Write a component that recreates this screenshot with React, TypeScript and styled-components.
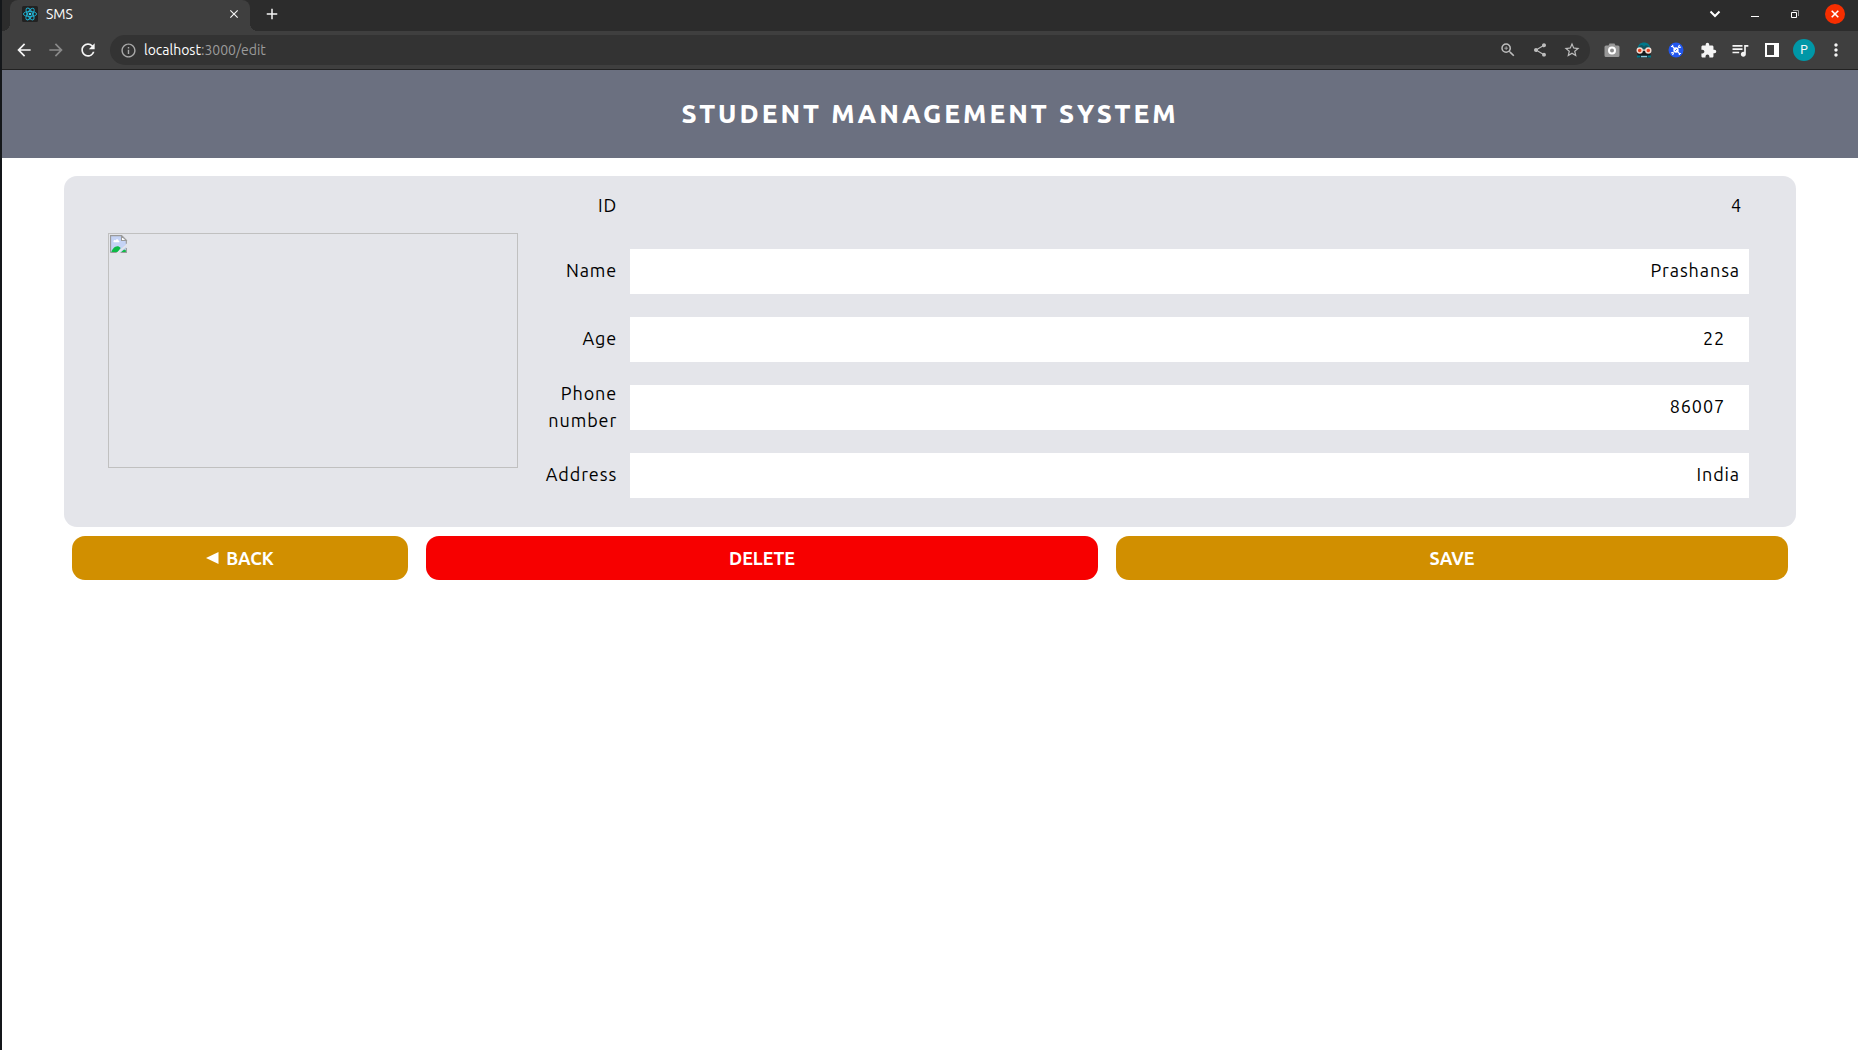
import React from "react";
import styled, { createGlobalStyle } from "styled-components";
import {
  MdArrowBack,
  MdArrowForward,
  MdRefresh,
  MdInfoOutline,
  MdZoomIn,
  MdShare,
  MdStarBorder,
  MdExtension,
  MdQueueMusic,
  MdMoreVert,
  MdClose,
  MdAdd,
} from "react-icons/md";

const GlobalStyle = createGlobalStyle`
  *, *::before, *::after { box-sizing: border-box; }
  body {
    margin: 0;
    background: #fff;
    color: #000;
    font-family: "Ubuntu", "Noto Sans", "Open Sans", sans-serif;
  }
  button, input { font: inherit; color: inherit; letter-spacing: inherit; }
  button { border: 0; padding: 0; background: none; cursor: pointer; }
`;

const Window = styled.div`
  min-height: 100vh;
  border-left: 2px solid #14171a;
`;

const TabStrip = styled.div`
  display: flex;
  align-items: center;
  height: 31px;
  padding: 0 13px 3px 8px;
  background: #2c2c2c;
  color: #fff;
`;

const Tab = styled.div`
  position: relative;
  display: flex;
  align-items: center;
  gap: 8px;
  width: 240px;
  height: 31px;
  margin-bottom: -3px;
  padding: 0 8px 3px 12px;
  border-radius: 8px 8px 0 0;
  background: #3f3f3f;
  font-size: 14px;
  line-height: 20px;

  &::before,
  &::after {
    content: "";
    position: absolute;
    bottom: 0;
    width: 8px;
    height: 8px;
  }
  &::before {
    right: 100%;
    background: radial-gradient(circle at 0 0, #2c2c2c 8px, #3f3f3f 8px);
  }
  &::after {
    left: 100%;
    background: radial-gradient(circle at 100% 0, #2c2c2c 8px, #3f3f3f 8px);
  }
`;

const TabTitle = styled.span`
  flex: 1;
`;

const IconButton = styled.button<{ $width?: number; $color?: string }>`
  display: flex;
  align-items: center;
  justify-content: center;
  flex: none;
  width: ${(p) => p.$width ?? 32}px;
  height: 24px;
  color: ${(p) => p.$color ?? "#f5f5f5"};
`;

const NewTab = styled(IconButton)`
  margin: 0 auto 0 8px;
`;

const CloseWindow = styled(IconButton)`
  width: 20px;
  height: 20px;
  margin-left: 10px;
  border-radius: 50%;
  background: #f62e00;
`;

const Toolbar = styled.div`
  display: flex;
  align-items: center;
  height: 39px;
  padding: 0 6px;
  border-bottom: 1px solid #222;
  background: #3f3f3f;
`;

const Omnibox = styled.div`
  display: flex;
  align-items: center;
  flex: 1;
  height: 30px;
  margin: 0 6px;
  padding: 0 2px;
  border-radius: 15px;
  background: #333;
`;

const Url = styled.div`
  flex: 1;
  color: #9b9b9b;
  font-size: 14px;
  line-height: 20px;
`;

const Host = styled.span`
  color: #fff;
`;

const Avatar = styled.span`
  display: flex;
  align-items: center;
  justify-content: center;
  width: 22px;
  height: 22px;
  border-radius: 50%;
  background: #0097a7;
  font-family: Roboto, sans-serif;
  font-size: 12px;
  line-height: 16px;
`;

const PageHeader = styled.header`
  display: flex;
  align-items: center;
  justify-content: center;
  height: 88px;
  background: #6b7080;
  color: #fff;
`;

const Title = styled.h1`
  margin: 0;
  font-size: 26px;
  font-weight: 800;
  line-height: 36px;
  letter-spacing: 3px;
  text-transform: uppercase;
`;

const Content = styled.form`
  padding: 18px 62px;
`;

const Card = styled.section`
  display: grid;
  grid-template-columns: 1fr 3fr;
  padding: 16px 47px 18px 44px;
  border-radius: 13px;
  background: #e4e5ea;
`;

const Photo = styled.div`
  align-self: center;
  height: 235px;
  padding: 1px;
  border: 1px solid #c0c0c0;
`;

const Fields = styled.div`
  font-size: 18px;
  line-height: 27px;
  letter-spacing: 0.05em;
`;

const Row = styled.div`
  display: grid;
  grid-template-columns: 1fr 10fr;
  align-items: center;
  min-height: 68px;
`;

const IdRow = styled(Row)`
  min-height: 27px;
  margin-bottom: 17px;
`;

const Label = styled.label`
  padding: 0 13px 1px 16px;
  text-align: right;
`;

const IdValue = styled.output`
  padding: 0 7px 1px;
  text-align: right;
`;

const Field = styled.input`
  width: 100%;
  height: 45px;
  padding: 8px 9px 10px;
  border: 0;
  border-radius: 0;
  background: #fff;
  text-align: right;
`;

const Actions = styled.div`
  display: flex;
  gap: 18px;
  padding: 9px 8px;
`;

const Action = styled.button<{ $grow: number; $danger?: boolean }>`
  display: flex;
  align-items: center;
  justify-content: center;
  gap: 7px;
  flex: ${(p) => p.$grow} 1 0;
  height: 44px;
  border-radius: 13px;
  background: ${(p) => (p.$danger ? "#f70000" : "#d18f00")};
  color: #fff;
  font-size: 18px;
  font-weight: 700;
  line-height: 27px;
`;

const Favicon = () => (
  <svg width="16" height="16" viewBox="0 0 16 16" aria-hidden="true">
    <rect width="16" height="16" rx="1.5" fill="#222" />
    <g fill="none" stroke="#1fb4d6" strokeWidth="0.9">
      <ellipse cx="8" cy="8" rx="6.6" ry="2.6" />
      <ellipse cx="8" cy="8" rx="6.6" ry="2.6" transform="rotate(60 8 8)" />
      <ellipse cx="8" cy="8" rx="6.6" ry="2.6" transform="rotate(120 8 8)" />
    </g>
    <circle cx="8" cy="8" r="1.3" fill="#3fd0f0" />
  </svg>
);

const ChevronIcon = () => (
  <svg width="12" height="12" viewBox="0 0 12 12" aria-hidden="true">
    <path d="M1.5 3.5 6 8l4.500-4.500" fill="none" stroke="#fff" strokeWidth="2" />
  </svg>
);

const MinimizeIcon = () => (
  <svg width="8" height="8" viewBox="0 0 8 8" aria-hidden="true">
    <path d="M0 6.500h8" stroke="#fff" />
  </svg>
);

const RestoreIcon = () => (
  <svg width="8" height="8" viewBox="0 0 8 8" aria-hidden="true">
    <path d="M2 .5h5.500V6" fill="none" stroke="#999" />
    <path d="M.5 2.500h5v5h-5z" fill="none" stroke="#fff" />
  </svg>
);

const CloseIcon = () => (
  <svg width="8" height="8" viewBox="0 0 8 8" aria-hidden="true">
    <path d="M.7.7l6.600 6.600M7.300.7.7 7.300" stroke="#fff" strokeWidth="1.600" />
  </svg>
);

const CameraIcon = () => (
  <svg width="16" height="16" viewBox="0 0 16 16" aria-hidden="true">
    <path
      d="M2 3.500h2.500l1-2h5l1 2H14A1.500 1.500 0 0 1 15.500 5v8.500A1.500 1.500 0 0 1 14 15H2a1.500 1.500 0 0 1-1.500-1.500V5A1.500 1.500 0 0 1 2 3.500z"
      fill="#999"
    />
    <circle cx="8" cy="8.500" r="3" fill="#8a8a8a" stroke="#fff" strokeWidth="2" />
  </svg>
);

const MaskIcon = () => (
  <svg width="16" height="16" viewBox="0 0 16 16" aria-hidden="true">
    <path d="M1.500 7C2 2.500 4.500.5 8 .5s6 2 6.500 6.500z" fill="#00788a" />
    <path d="M3 5.500C3.500 3 5.500 2 8 4.500c1.500-2 4-1.500 5 1V8H3z" fill="#125560" />
    <path d="M1.500 9h13v5.500a1 1 0 0 1-1 1h-11a1 1 0 0 1-1-1z" fill="#15191c" />
    <path d="M1 13.500h3.500V15.500H1zM11.500 13.500H15v2h-3.500z" fill="#00788a" />
    <path d="M5 13.800h6v1.500H5z" fill="#8ecbe0" />
    <circle cx="3.700" cy="8.500" r="2.500" fill="#e5401d" stroke="#f3dcd2" strokeWidth="1.400" />
    <circle cx="12.300" cy="8.500" r="2.500" fill="#e5401d" stroke="#f3dcd2" strokeWidth="1.400" />
    <path d="M6 7.500h4v1.200H6z" fill="#f3dcd2" />
  </svg>
);

const BlueIcon = () => (
  <svg width="16" height="16" viewBox="0 0 16 16" aria-hidden="true">
    <circle cx="8" cy="8" r="7.500" fill="#2257ee" />
    <circle cx="8" cy="8" r="2.700" fill="#fff" />
    <path
      d="M3 4.500l1.800.2M4.500 3l.4 1.800L6.500 6.500M13 11.500l-1.800-.2M11.500 13l-.4-1.800-1.600-1.700M11.500 3l-1.300 2.500M13 5l-2.500.8M4.500 13l1.300-2.500M3 11l2.500-.8"
      fill="none"
      stroke="#fff"
      strokeWidth="1.200"
    />
    <path d="M7.200 8.800l1.600-1.600" stroke="#2257ee" />
  </svg>
);

const PanelIcon = () => (
  <svg width="14" height="14" viewBox="0 0 14 14" aria-hidden="true">
    <path d="M0 0h14v14H0zM2 2v10h7V2z" fill="#fff" fillRule="evenodd" />
  </svg>
);

const BackTriangle = () => (
  <svg width="13" height="12" viewBox="0 0 13 12" aria-hidden="true">
    <path d="M0 6 12.500 0v12z" fill="#fff" />
  </svg>
);

const BrokenImageIcon = () => (
  <svg width="18" height="18" viewBox="0 0 16 16" aria-hidden="true" display="block">
    <path d="M.5.5H10.500l4 4v11H.5z" fill="#c5d3f5" />
    <path d="M3 6c0-1.300 1.200-1.800 2-1.200.6-1.700 2.600-1.200 2.600.2C8.600 5 8.600 6.500 7.800 6.500H3.500z" fill="#fff" />
    <path d="M1 15.500c1-3 3.200-5.500 5.500-5.500 1.200 0 2 .6 3 1.600L6.500 15.500z" fill="#0dbb46" />
    <path d="M9.500 15.500l3-2.700 2 .9v1.800z" fill="#0dbb46" />
    <path d="M.5 15.500V.5h9.800l4.200 4.200v3M14.500 11.500v4H9.500M.5 15.500h5.500" fill="none" stroke="#9a9a9a" />
    <path d="M10.200.8v4h4.200z" fill="#fff" stroke="#9a9a9a" strokeWidth="0.900" />
    <path d="M6 16.500l9.500-8" stroke="#e4e5ea" strokeWidth="1.500" />
  </svg>
);

const student = {
  id: 4,
  fields: [
    { name: "name", label: "Name", type: "text", value: "Prashansa" },
    { name: "age", label: "Age", type: "number", value: "22" },
    { name: "phone", label: "Phone number", type: "number", value: "86007" },
    { name: "address", label: "Address", type: "text", value: "India" },
  ],
};

export default function App() {
  return (
    <Window>
      <GlobalStyle />
      <TabStrip>
        <Tab>
          <Favicon />
          <TabTitle>SMS</TabTitle>
          <IconButton $width={16} aria-label="Close tab">
            <MdClose size={14} />
          </IconButton>
        </Tab>
        <NewTab $width={28} aria-label="New tab">
          <MdAdd size={18} />
        </NewTab>
        <IconButton $width={40} aria-label="Search tabs">
          <ChevronIcon />
        </IconButton>
        <IconButton $width={40} aria-label="Minimize">
          <MinimizeIcon />
        </IconButton>
        <IconButton $width={40} aria-label="Restore">
          <RestoreIcon />
        </IconButton>
        <CloseWindow aria-label="Close window">
          <CloseIcon />
        </CloseWindow>
      </TabStrip>

      <Toolbar>
        <IconButton aria-label="Back">
          <MdArrowBack size={20} />
        </IconButton>
        <IconButton $color="#8a8a8a" aria-label="Forward">
          <MdArrowForward size={20} />
        </IconButton>
        <IconButton aria-label="Reload">
          <MdRefresh size={20} />
        </IconButton>
        <Omnibox>
          <IconButton $color="#a9a9a9" aria-label="Site information">
            <MdInfoOutline size={17} />
          </IconButton>
          <Url>
            <Host>localhost</Host>:3000/edit
          </Url>
          <IconButton $color="#bdbdbd" aria-label="Zoom">
            <MdZoomIn size={18} />
          </IconButton>
          <IconButton $color="#bdbdbd" aria-label="Share">
            <MdShare size={16} />
          </IconButton>
          <IconButton $color="#bdbdbd" aria-label="Bookmark">
            <MdStarBorder size={18} />
          </IconButton>
        </Omnibox>
        <IconButton aria-label="Screenshot">
          <CameraIcon />
        </IconButton>
        <IconButton aria-label="Incognito mask">
          <MaskIcon />
        </IconButton>
        <IconButton aria-label="Sync">
          <BlueIcon />
        </IconButton>
        <IconButton aria-label="Extensions">
          <MdExtension size={17} />
        </IconButton>
        <IconButton aria-label="Media">
          <MdQueueMusic size={20} />
        </IconButton>
        <IconButton aria-label="Side panel">
          <PanelIcon />
        </IconButton>
        <IconButton aria-label="Profile">
          <Avatar>P</Avatar>
        </IconButton>
        <IconButton aria-label="Menu">
          <MdMoreVert size={20} />
        </IconButton>
      </Toolbar>

      <PageHeader>
        <Title>Student Management System</Title>
      </PageHeader>

      <Content onSubmit={(e) => e.preventDefault()}>
        <Card>
          <Photo role="img" aria-label="Student">
            <BrokenImageIcon />
          </Photo>
          <Fields>
            <IdRow>
              <Label htmlFor="id">ID</Label>
              <IdValue id="id">{student.id}</IdValue>
            </IdRow>
            {student.fields.map((f) => (
              <Row key={f.name}>
                <Label htmlFor={f.name}>{f.label}</Label>
                <Field id={f.name} name={f.name} type={f.type} defaultValue={f.value} />
              </Row>
            ))}
          </Fields>
        </Card>
        <Actions>
          <Action type="button" $grow={1}>
            <BackTriangle />
            BACK
          </Action>
          <Action type="button" $grow={2} $danger>
            DELETE
          </Action>
          <Action type="submit" $grow={2}>
            SAVE
          </Action>
        </Actions>
      </Content>
    </Window>
  );
}
